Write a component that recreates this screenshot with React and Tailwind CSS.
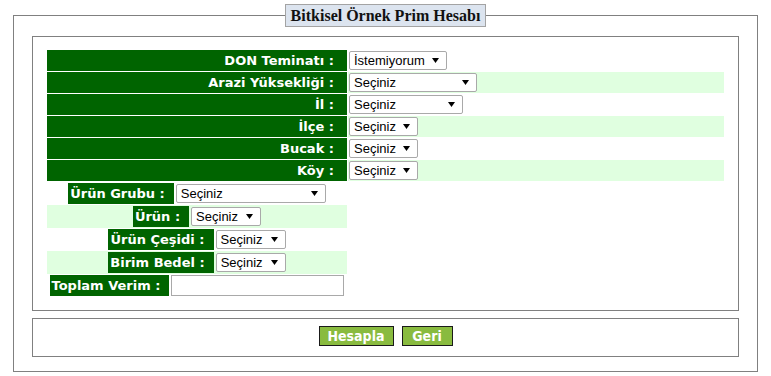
import React from "react";

const labelFont = "font-['DejaVu_Sans',Verdana,sans-serif]";
const fieldFont = "font-['Liberation_Sans',Arial,sans-serif]";

// Windows-style dropdown look
const Select = ({ value = "Seçiniz", width }) => (
  <div
    className={`flex items-center justify-between h-[19px] rounded-[2px] border border-[#a9a9a9] bg-white pl-[4px] pr-[7px] ${width}`}
  >
    <span className={`${fieldFont} text-[13px] leading-none text-black`}>{value}</span>
    <svg width="7" height="5" viewBox="0 0 7 5">
      <path d="M0 0h7L3.5 5z" fill="#000" />
    </svg>
  </div>
);

const topRows = [
  { label: "DON Teminatı :", value: "İstemiyorum", width: "w-[98px]" },
  { label: "Arazi Yüksekliği :", width: "w-[128px]" },
  { label: "İl :", width: "w-[114px]" },
  { label: "İlçe :", width: "w-[69px]" },
  { label: "Bucak :", width: "w-[69px]" },
  { label: "Köy :", width: "w-[69px]" },
];

const productRows = [
  { label: "Ürün Grubu :", width: "w-[150px]" },
  { label: "Ürün :", width: "w-[70px]" },
  { label: "Ürün Çeşidi :", width: "w-[70px]" },
  { label: "Birim Bedel :", width: "w-[70px]" },
];

const App = () => {
  return (
    <div className="min-h-screen bg-white pt-[4px]">
      <fieldset className="mx-[13px] border border-[#808080] px-[18px] pb-[14px]">
        <legend className="mx-auto border border-[#a3a3a3] bg-[#dce4ef] px-[5px] font-['Liberation_Serif','Times_New_Roman',serif] text-[16px] font-bold leading-[21px] text-[#111]">
          Bitkisel Örnek Prim Hesabı
        </legend>

        {/* Form box */}
        <div className="mt-[9px] border border-[#808080] px-[14px] py-[13px]">
          {topRows.map((row, i) => (
            <div key={row.label} className="flex h-[21px] mb-px">
              <div
                className={`w-[300px] bg-[#006400] pr-[13px] text-right text-[13px] font-bold leading-[21px] text-white ${labelFont}`}
              >
                {row.label}
              </div>
              <div
                className={`ml-px flex flex-1 items-center pl-px ${
                  i % 2 === 1 ? "bg-[#e0ffe0]" : "bg-white"
                }`}
              >
                <Select value={row.value} width={row.width} />
              </div>
            </div>
          ))}

          {/* Product section */}
          <div className="w-[300px]">
            {productRows.map((row, i) => (
              <div
                key={row.label}
                className={`flex h-[23px] items-center justify-center ${
                  i % 2 === 1 ? "bg-[#e0ffe0]" : "bg-white"
                }`}
              >
                <div
                  className={`h-[21px] bg-[#006400] pl-[2px] pr-[9px] text-[13px] font-bold leading-[21px] text-white ${labelFont}`}
                >
                  {row.label}
                </div>
                <div className="ml-[2px]">
                  <Select width={row.width} />
                </div>
              </div>
            ))}
            <div className="flex h-[23px] items-center justify-center">
              <div
                className={`h-[21px] bg-[#006400] pl-[2px] pr-[9px] text-[13px] font-bold leading-[21px] text-white ${labelFont}`}
              >
                Toplam Verim :
              </div>
              <input
                type="text"
                className="ml-[2px] h-[21px] w-[173px] border border-[#a9a9a9] bg-white outline-none"
              />
            </div>
          </div>
        </div>

        {/* Buttons box */}
        <div className="mt-[7px] flex justify-center gap-[8px] border border-[#808080] pt-[7px] pb-[10px]">
          <button className="h-[20px] w-[75px] border border-[#1a1a1a] bg-[#89bb3f] font-['Liberation_Sans_Narrow','DejaVu_Sans_Condensed',sans-serif] text-[14px] font-bold leading-none text-white">
            Hesapla
          </button>
          <button className="h-[20px] w-[51px] border border-[#1a1a1a] bg-[#89bb3f] font-['Liberation_Sans_Narrow','DejaVu_Sans_Condensed',sans-serif] text-[14px] font-bold leading-none text-white">
            Geri
          </button>
        </div>
      </fieldset>
    </div>
  );
};

export default App;
